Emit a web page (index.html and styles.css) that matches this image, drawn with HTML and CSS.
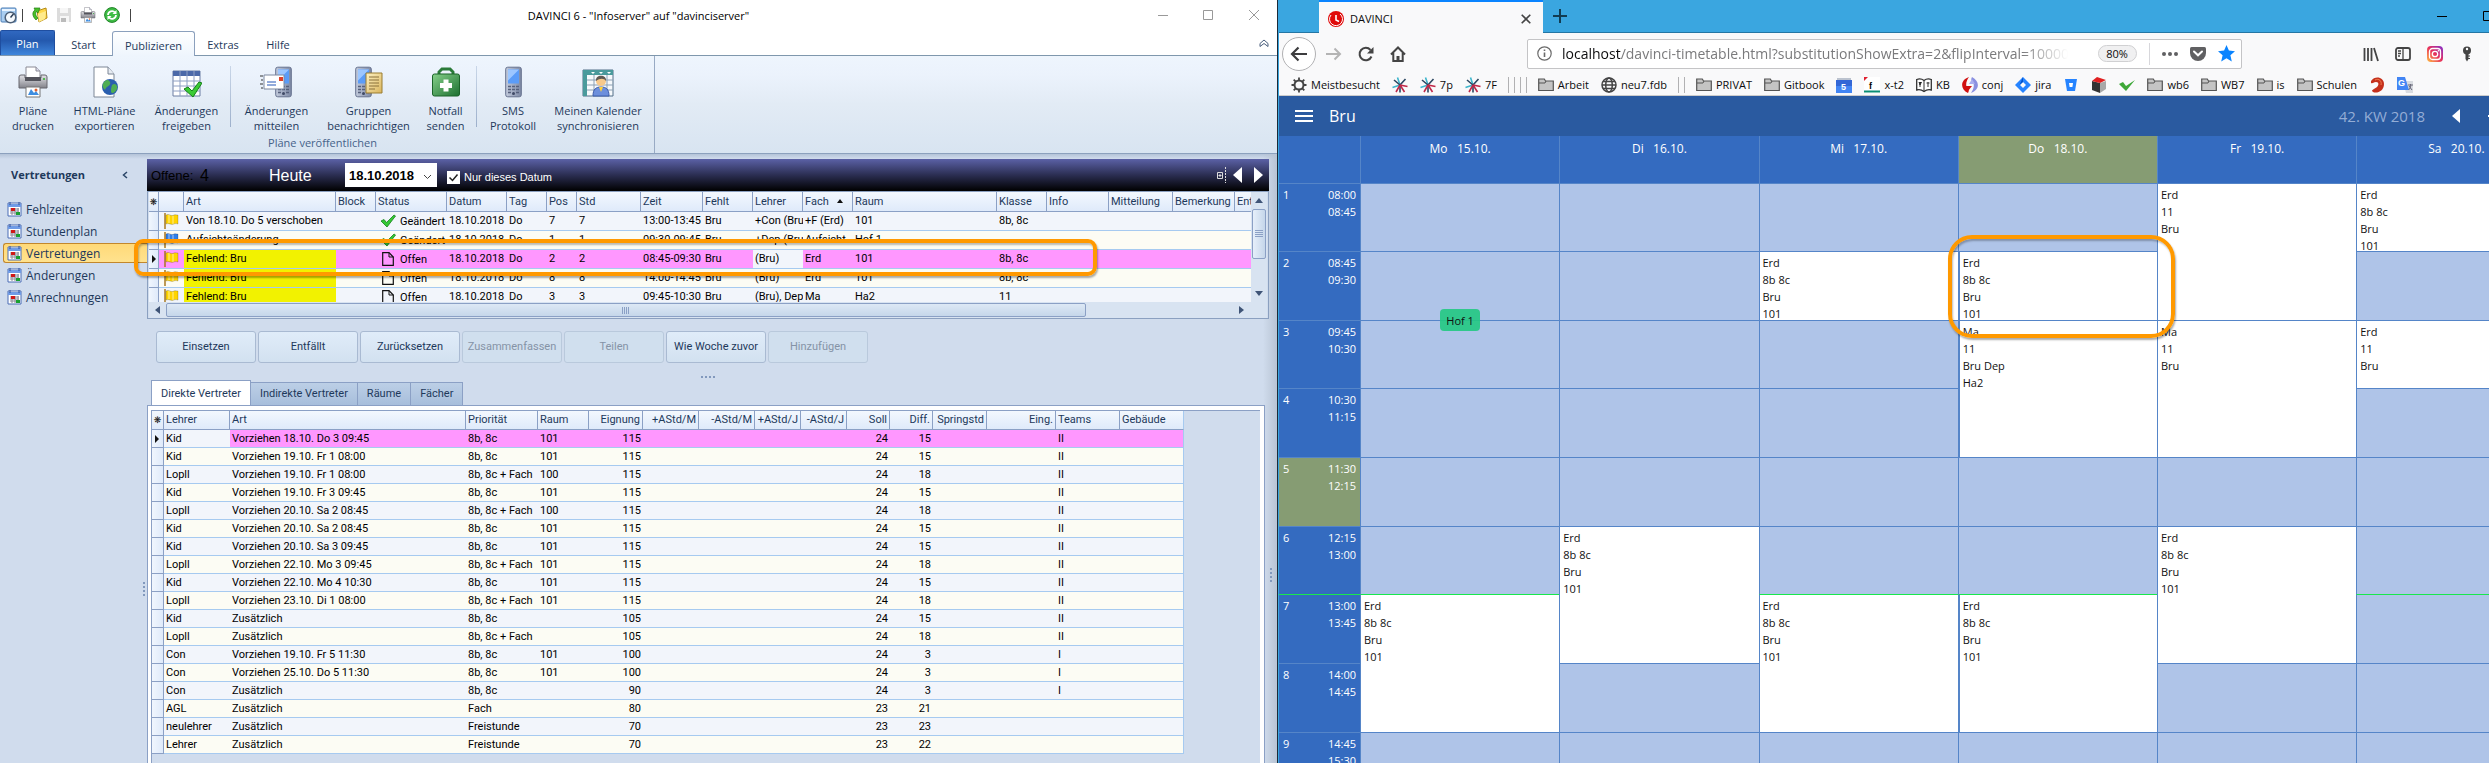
FILE: index.html
```html
<!DOCTYPE html>
<html lang="de">
<head>
<meta charset="utf-8">
<title>DAVINCI</title>
<link rel="stylesheet" href="styles.css">
</head>
<body>
<svg class="defs" aria-hidden="true">
  <defs>
    <linearGradient id="gGrey" x1="0" y1="0" x2="0" y2="1"><stop offset="0" stop-color="#e4e4e8"/><stop offset="1" stop-color="#82828a"/></linearGradient>
    <linearGradient id="gGold" x1="0" y1="0" x2="1" y2="1"><stop offset="0" stop-color="#fff3c4"/><stop offset="1" stop-color="#d9b45c"/></linearGradient>
    <linearGradient id="gGreen" x1="0" y1="0" x2="1" y2="1"><stop offset="0" stop-color="#86d08a"/><stop offset="1" stop-color="#1c7030"/></linearGradient>
    <linearGradient id="gPhone" x1="0" y1="0" x2="1" y2="0"><stop offset="0" stop-color="#c3cbdc"/><stop offset="1" stop-color="#7d89a5"/></linearGradient>
    <linearGradient id="gInsta" x1="0" y1="1" x2="1" y2="0"><stop offset="0" stop-color="#ffc040"/><stop offset=".5" stop-color="#e8305c"/><stop offset="1" stop-color="#8030d0"/></linearGradient>
    <symbol id="cal" viewBox="0 0 15 15"><path d="M1 1h13v13H1z" fill="#fff" stroke="#4a6db5"/><path d="M1 2h13v3H1z" fill="#6f9be6"/><path d="M3 0v3M12 0v3" stroke="#2c4f9c"/><path d="M3 7h9M3 9h9M3 11h9M5 6v7M8 6v7M11 6v7" stroke="#8a8a99"/><path d="M4 6h4v3H4z" fill="#d01818"/><path d="M9 10h4v3H9z" fill="#18a030"/></symbol>
    <symbol id="flag" viewBox="0 0 16 18"><path d="M2 1v16" stroke="#a87820" stroke-width="1.5"/><path d="M3 3c3-2 5 2 8 0 1-.6 3 0 4 0v9c-2-.6-3-.4-4 0-3 1.500-5-1.500-8 0z" fill="currentColor" stroke="#00000044" stroke-width=".7"/><path d="M6 3v8M10 4v8" stroke="#ffffff66" stroke-width="1.500"/></symbol>
    <symbol id="tick" viewBox="0 0 16 14"><path d="M1 7l3-1.500 2.500 3L14 1l1.500 1L7 13z" fill="#35c935" stroke="#16801c" stroke-width=".8"/></symbol>
    <symbol id="doc" viewBox="0 0 12 14"><path d="M.7.7H7L11.300 5v8.300H.7z" fill="none" stroke="#111" stroke-width="1.200"/><path d="M7 .7V5h4.300" fill="none" stroke="#111"/></symbol>
    <symbol id="folder" viewBox="0 0 16 16"><path d="M.7 13.500V2h5.600l1.200 2h7.800v9.500z" fill="#c4c4c4" stroke="#555" stroke-width="1.200"/><path d="M1 6h6l1-2" fill="none" stroke="#555"/></symbol>
    <symbol id="burst" viewBox="0 0 16 16"><path d="M8 8L5.500.5M8 8L.5 10.500" stroke="#3fb6cc" stroke-width="1.600"/><path d="M8 8l5.500-6M8 8L2 3M8 8v7.500" stroke="#2b4660" stroke-width="1.600"/><path d="M8 8l7.500 1.500M8 8l4.500 7M8 8l-4 7" stroke="#c02848" stroke-width="1.600"/></symbol>
    <symbol id="phone" viewBox="0 0 17 31"><rect x=".7" y=".7" width="15.600" height="29.600" rx="2" fill="url(#gPhone)" stroke="#66718e"/><path d="M3 3h11v14H3z" fill="#5b9cf8"/><path d="M3 3h11L3 14z" fill="#9cc6ff"/><path d="M3 20h3m1 0h3m1 0h3M3 23h3m1 0h3m1 0h3M3 26h3m5 0h3" stroke="#56607c" stroke-width="1.600"/><circle cx="8.500" cy="27" r="1.500" fill="#404a66"/></symbol>
    <symbol id="printer" viewBox="0 0 30 32"><path d="M8 12V1h10l4 4v7z" fill="#fff" stroke="#8a8a95"/><path d="M18 1v4h4" fill="#dde" stroke="#8a8a95"/><path d="M1 11q0-2 2-2h4v3h16V9h4q2 0 2 2v11H1z" fill="url(#gGrey)" stroke="#66666e"/><path d="M7 11h16v4H7z" fill="#54545c"/><path d="M8 21h14v10H8z" fill="#fff" stroke="#777"/><path d="M10 29l3-6 3 4 2-2 3 4z" fill="#3e8de0"/><circle cx="18" cy="24" r="1.500" fill="#e06030"/><circle cx="26" cy="13" r="1" fill="#28b428"/></symbol>
  </defs>
</svg>
<div class="desktop">

<section class="planner">
  <header class="titlebar">
    <div class="quick">
      <svg width="17" height="17" viewBox="0 0 17 17"><rect x="1" y="1" width="15" height="14" rx="1" fill="#a9cdf0" stroke="#4b7db5"/><path d="M2 3h13" stroke="#e9f4ff" stroke-width="2"/><circle cx="10.500" cy="10.500" r="5.300" fill="#f4f8fc" stroke="#4d6078" stroke-width="1.500"/><path d="M10.500 10.500l3-3.500" stroke="#2b3c54" stroke-width="1.500"/></svg>
      <i class="bar"></i>
      <svg class="open" width="16" height="16" viewBox="0 0 16 16"><path d="M5 4l9-3 1 10-8 4z" fill="#ffd84a" stroke="#b58a14"/><path d="M6 7l8-3-1 8-6 3z" fill="#ffeb8c"/><path d="M4 13C0 9 0 5 3 3L2 1l6 0-2 5-1.500-1.500C3 6 3.500 9 6 11z" fill="#48c028" stroke="#237d12" stroke-width=".7"/></svg>
      <svg width="16" height="16" viewBox="0 0 16 16"><path d="M1 1h14v14H1z" fill="#dcdcdc"/><path d="M4 1h8v5H4zM4 9h9v6H4z" fill="#f6f6f6"/><path d="M5 11h5v4H5z" fill="#bbb"/></svg>
      <svg width="16" height="16"><use href="#printer"/></svg>
      <svg width="16" height="16" viewBox="0 0 16 16"><circle cx="8" cy="8" r="7.400" fill="#3ebc44" stroke="#218428"/><path d="M4 8a4 4 0 0 1 7-2.500M12 8a4 4 0 0 1-7 2.500" fill="none" stroke="#fff" stroke-width="1.800"/><path d="M12.500 3v4h-4zM3.500 13V9h4z" fill="#fff"/></svg>
      <i class="bar"></i>
    </div>
    <h1>DAVINCI 6 - "Infoserver" auf "davinciserver"</h1>
    <svg class="wincontrols" width="102" height="12" viewBox="0 0 102 12" fill="none" stroke="#999"><path d="M0 6.500h10M45.500 1.500h9v9h-9zM91 1l10 10M101 1L91 11"/></svg>
  </header>
  <nav class="tabs">
    <button class="plan">Plan</button>
    <button class="t-start">Start</button>
    <button class="t-pub">Publizieren</button>
    <button class="t-ext">Extras</button>
    <button>Hilfe</button>
    <svg class="collapse" width="10" height="8" viewBox="0 0 10 8"><path d="M5 1l4 3.500v3L5 4.500l-4 3v-3z" fill="#fff" stroke="#4a5f7d"/></svg>
  </nav>
  <div class="ribbon">
    <div class="group">
      <div class="tools">
        <button class="w66"><svg width="30" height="32"><use href="#printer"/></svg>Pläne<br>drucken</button>
        <button class="w78"><svg width="30" height="32" viewBox="0 0 30 32"><path d="M4 1h14l6 7v23H4z" fill="#fff" stroke="#7c8796"/><path d="M18 1v7h6" fill="#e6ebf2" stroke="#7c8796"/><circle cx="20" cy="21" r="8" fill="#2b5fae"/><path d="M14 16c3-3 5-2 6 0s-1 4-3 5-1 4-3 2-2-5 0-7zM22 19c2-2 4-1 5 1s-1 6-4 7-2-5-1-8z" fill="#4fae54"/></svg>HTML-Pläne<br>exportieren</button>
        <button class="w87"><svg width="30" height="32" viewBox="0 0 30 32"><path d="M1 5h27v25H1z" fill="#fff" stroke="#6d7fa3"/><path d="M1 5h27v5H1z" fill="#4c69a8"/><path d="M1 15h27M1 20h27M1 25h27M8 5v25M15 5v25M22 5v25" stroke="#8fa0c4"/><path d="M12 23l4-2 4 4 7-9 3 1-9 14z" fill="#3bcb35" stroke="#178019"/></svg>Änderungen<br>freigeben</button>
        <i class="sep"></i>
        <button class="w91"><svg width="34" height="32" viewBox="0 0 34 32"><svg x="15" y="0" width="17" height="31"><use href="#phone"/></svg><path d="M4 9h20v14H4z" fill="#fff" stroke="#7c88a0"/><path d="M7 16h9M7 19h9" stroke="#6f8fd0" stroke-width="1.500"/><path d="M19 11h4v4h-4z" fill="#e04028"/><path d="M0 10h3M1 14h2M0 18h3M1 22h2" stroke="#333"/></svg>Änderungen<br>mitteilen</button>
        <button class="w93"><svg width="30" height="32" viewBox="0 0 30 32"><svg x="1" y="0" width="17" height="31"><use href="#phone"/></svg><path d="M12 7h16v20H12z" fill="url(#gGold)" stroke="#9a7c30"/><path d="M15 11h10M15 14h10M15 17h10M15 20h10M15 23h6" stroke="#8a713a"/></svg>Gruppen<br>benachrichtigen</button>
        <button class="w62"><svg width="30" height="32" viewBox="0 0 30 32"><path d="M8 9V6l3-3h8l3 3v3" fill="none" stroke="#2a7a38" stroke-width="3"/><rect x="1.500" y="8" width="27" height="22" rx="2" fill="url(#gGreen)" stroke="#1b6429"/><path d="M12.500 13.500h5v3.500h3.500v5h-3.500v3.500h-5V22H9v-5h3.500z" fill="#fff"/></svg>Notfall<br>senden</button>
        <i class="sep"></i>
        <button class="w72"><svg width="17" height="31"><use href="#phone"/></svg>SMS<br>Protokoll</button>
        <button class="w98"><svg width="32" height="32" viewBox="0 0 32 32"><path d="M1 4h30v26H1z" fill="#f6f9fc" stroke="#536f88"/><path d="M1 4h30v5H1zM1 4h4v26H1z" fill="#4a9a9c"/><path d="M5 14h26M5 19h26M5 24h26M12 9v21M25 9v21" stroke="#8ba0b4"/><path d="M9 6l2 2 2-2zM17 6l2 2 2-2zM25 6l2 2 2-2z" fill="#fff"/><path d="M11 30c0-7 3-9 8-9s8 2 8 9z" fill="#6d8fdc" stroke="#3c5cac"/><circle cx="19" cy="15" r="5" fill="#f7c98c"/><path d="M14 15c-1-7 11-7 10 0-2-3-6-3-10 0z" fill="#5f5a55"/><path d="M17 21h4l-2 5z" fill="#ffd23c"/></svg>Meinen Kalender<br>synchronisieren</button>
      </div>
      <div class="caption">Pläne veröffentlichen</div>
    </div>
  </div>

  <div class="workspace">
    <aside class="side">
      <div class="side-head"><strong>Vertretungen</strong><svg width="6" height="8" viewBox="0 0 6 8"><path d="M5 1L1.500 4 5 7" fill="none" stroke="#2b4668" stroke-width="1.500"/></svg></div>
      <a href="#"><svg width="15" height="15"><use href="#cal"/></svg>Fehlzeiten</a>
      <a href="#"><svg width="15" height="15"><use href="#cal"/></svg>Stundenplan</a>
      <a href="#" class="on"><svg width="15" height="15"><use href="#cal"/></svg>Vertretungen</a>
      <a href="#"><svg width="15" height="15"><use href="#cal"/></svg>Änderungen</a>
      <a href="#"><svg width="15" height="15"><use href="#cal"/></svg>Anrechnungen</a>
      <span class="grip-v"></span>
    </aside>

    <main class="content">
      <div class="datebar">
        <span class="open-label">Offene:</span><span class="open-count">4</span>
        <span class="today">Heute</span>
        <span class="combo"><select aria-label="Datum"><option>18.10.2018</option></select><svg width="9" height="6" viewBox="0 0 9 6"><path d="M1 1l3.500 3.500L8 1" fill="none" stroke="#444"/></svg></span>
        <label class="only"><input type="checkbox" checked>Nur dieses Datum</label>
        <svg class="pager" width="48" height="18" viewBox="0 0 48 18"><path d="M1.500 6.500h5v6h-5z" fill="none" stroke="#ddd"/><path d="M4 8v3M2.500 9.500h3" stroke="#ddd"/><path d="M9.500 1v16" stroke="#ddd" stroke-dasharray="2 1"/><path d="M26 1v16L17 9zM38 1v16l9-8z" fill="#fff"/></svg>
      </div>

      <div class="pane">
        <div class="clip">
          <table class="grid subs">
            <colgroup><col class="c10"><col class="c25"><col class="c152"><col class="c40"><col class="c71"><col class="c60"><col class="c40"><col class="c30"><col class="c64"><col class="c62"><col class="c50"><col class="c50"><col class="c50"><col class="c144"><col class="c50"><col class="c62"><col class="c64"><col class="c62"><col class="c40"></colgroup>
            <thead><tr><th class="star">❋</th><th></th><th>Art</th><th>Block</th><th>Status</th><th>Datum</th><th>Tag</th><th>Pos</th><th>Std</th><th>Zeit</th><th>Fehlt</th><th>Lehrer</th><th>Fach <i class="asc"></i></th><th>Raum</th><th>Klasse</th><th>Info</th><th>Mitteilung</th><th>Bemerkung</th><th>Ent</th></tr></thead>
            <tbody>
              <tr><td class="ind"></td><td class="fl"><svg class="yellow" width="16" height="18"><use href="#flag"/></svg></td><td>Von 18.10. Do 5 verschoben</td><td></td><td class="st"><svg width="16" height="14"><use href="#tick"/></svg>Geändert</td><td>18.10.2018</td><td>Do</td><td>7</td><td>7</td><td>13:00-13:45</td><td>Bru</td><td>+Con (Bru)</td><td>+F (Erd)</td><td>101</td><td>8b, 8c</td><td></td><td></td><td></td><td></td></tr>
              <tr><td class="ind"></td><td class="fl"><svg class="blue" width="16" height="18"><use href="#flag"/></svg></td><td>Aufsichtsänderung</td><td></td><td class="st"><svg width="16" height="14"><use href="#tick"/></svg>Geändert</td><td>18.10.2018</td><td>Do</td><td>1</td><td>1</td><td>09:30-09:45</td><td>Bru</td><td>+Dep (Bru)</td><td>Aufsicht</td><td>Hof 1</td><td></td><td></td><td></td><td></td><td></td></tr>
              <tr class="sel"><td class="ind"><i class="cur"></i></td><td class="fl"><svg class="yellow" width="16" height="18"><use href="#flag"/></svg></td><td class="hl">Fehlend: Bru</td><td></td><td class="st"><svg width="16" height="14"><use href="#doc"/></svg>Offen</td><td>18.10.2018</td><td>Do</td><td>2</td><td>2</td><td>08:45-09:30</td><td>Bru</td><td class="focus">(Bru)</td><td>Erd</td><td>101</td><td>8b, 8c</td><td></td><td></td><td></td><td></td></tr>
              <tr><td class="ind"></td><td class="fl"><svg class="yellow" width="16" height="18"><use href="#flag"/></svg></td><td class="hl">Fehlend: Bru</td><td></td><td class="st"><svg width="16" height="14"><use href="#doc"/></svg>Offen</td><td>18.10.2018</td><td>Do</td><td>8</td><td>8</td><td>14:00-14:45</td><td>Bru</td><td>(Bru)</td><td>Erd</td><td>101</td><td>8b, 8c</td><td></td><td></td><td></td><td></td></tr>
              <tr><td class="ind"></td><td class="fl"><svg class="yellow" width="16" height="18"><use href="#flag"/></svg></td><td class="hl">Fehlend: Bru</td><td></td><td class="st"><svg width="16" height="14"><use href="#doc"/></svg>Offen</td><td>18.10.2018</td><td>Do</td><td>3</td><td>3</td><td>09:45-10:30</td><td>Bru</td><td>(Bru), Dep</td><td>Ma</td><td>Ha2</td><td>11</td><td></td><td></td><td></td><td></td></tr>
            </tbody>
          </table>
        </div>
        <div class="vscroll"><i class="up"></i><span class="thumb"></span><i class="down"></i></div>
        <div class="hscroll"><i class="left"></i><span class="thumb"></span><i class="right"></i></div>
      </div>
      <div class="ring ring-row"></div>

      <div class="actions">
        <button>Einsetzen</button><button>Entfällt</button><button>Zurücksetzen</button><button disabled>Zusammenfassen</button><button disabled>Teilen</button><button>Wie Woche zuvor</button><button disabled>Hinzufügen</button>
      </div>
      <div class="grip-h"></div>

      <div class="subtabs"><button class="on">Direkte Vertreter</button><button>Indirekte Vertreter</button><button>Räume</button><button>Fächer</button></div>
      <div class="sheet">
        <div class="sheet-in">
        <table class="grid reps">
          <colgroup><col class="c12"><col class="c66"><col class="c236"><col class="c72"><col class="c51"><col class="c54"><col class="c56"><col class="c56"><col class="c46"><col class="c46"><col class="c43"><col class="c43"><col class="c54"><col class="c69"><col class="c64"><col class="c64"></colgroup>
          <thead><tr><th class="star">❋</th><th>Lehrer</th><th>Art</th><th>Priorität</th><th>Raum</th><th class="r">Eignung</th><th class="r">+AStd/M</th><th class="r">-AStd/M</th><th class="r">+AStd/J</th><th class="r">-AStd/J</th><th class="r">Soll</th><th class="r">Diff.</th><th class="r">Springstd</th><th class="r">Eing.</th><th>Teams</th><th>Gebäude</th></tr></thead>
          <tbody>
            <tr class="sel"><td class="ind"><i class="cur"></i></td><td class="focus">Kid</td><td>Vorziehen 18.10. Do 3 09:45</td><td>8b, 8c</td><td>101</td><td class="r">115</td><td colspan="4"></td><td class="r">24</td><td class="r">15</td><td colspan="2"></td><td>II</td><td></td></tr>
            <tr><td class="ind"></td><td>Kid</td><td>Vorziehen 19.10. Fr 1 08:00</td><td>8b, 8c</td><td>101</td><td class="r">115</td><td colspan="4"></td><td class="r">24</td><td class="r">15</td><td colspan="2"></td><td>II</td><td></td></tr>
            <tr><td class="ind"></td><td>Lopll</td><td>Vorziehen 19.10. Fr 1 08:00</td><td>8b, 8c + Fach</td><td>100</td><td class="r">115</td><td colspan="4"></td><td class="r">24</td><td class="r">18</td><td colspan="2"></td><td>II</td><td></td></tr>
            <tr><td class="ind"></td><td>Kid</td><td>Vorziehen 19.10. Fr 3 09:45</td><td>8b, 8c</td><td>101</td><td class="r">115</td><td colspan="4"></td><td class="r">24</td><td class="r">15</td><td colspan="2"></td><td>II</td><td></td></tr>
            <tr><td class="ind"></td><td>Lopll</td><td>Vorziehen 20.10. Sa 2 08:45</td><td>8b, 8c + Fach</td><td>100</td><td class="r">115</td><td colspan="4"></td><td class="r">24</td><td class="r">18</td><td colspan="2"></td><td>II</td><td></td></tr>
            <tr><td class="ind"></td><td>Kid</td><td>Vorziehen 20.10. Sa 2 08:45</td><td>8b, 8c</td><td>101</td><td class="r">115</td><td colspan="4"></td><td class="r">24</td><td class="r">15</td><td colspan="2"></td><td>II</td><td></td></tr>
            <tr><td class="ind"></td><td>Kid</td><td>Vorziehen 20.10. Sa 3 09:45</td><td>8b, 8c</td><td>101</td><td class="r">115</td><td colspan="4"></td><td class="r">24</td><td class="r">15</td><td colspan="2"></td><td>II</td><td></td></tr>
            <tr><td class="ind"></td><td>Lopll</td><td>Vorziehen 22.10. Mo 3 09:45</td><td>8b, 8c + Fach</td><td>101</td><td class="r">115</td><td colspan="4"></td><td class="r">24</td><td class="r">18</td><td colspan="2"></td><td>II</td><td></td></tr>
            <tr><td class="ind"></td><td>Kid</td><td>Vorziehen 22.10. Mo 4 10:30</td><td>8b, 8c</td><td>101</td><td class="r">115</td><td colspan="4"></td><td class="r">24</td><td class="r">15</td><td colspan="2"></td><td>II</td><td></td></tr>
            <tr><td class="ind"></td><td>Lopll</td><td>Vorziehen 23.10. Di 1 08:00</td><td>8b, 8c + Fach</td><td>101</td><td class="r">115</td><td colspan="4"></td><td class="r">24</td><td class="r">18</td><td colspan="2"></td><td>II</td><td></td></tr>
            <tr><td class="ind"></td><td>Kid</td><td>Zusätzlich</td><td>8b, 8c</td><td></td><td class="r">105</td><td colspan="4"></td><td class="r">24</td><td class="r">15</td><td colspan="2"></td><td>II</td><td></td></tr>
            <tr><td class="ind"></td><td>Lopll</td><td>Zusätzlich</td><td>8b, 8c + Fach</td><td></td><td class="r">105</td><td colspan="4"></td><td class="r">24</td><td class="r">18</td><td colspan="2"></td><td>II</td><td></td></tr>
            <tr><td class="ind"></td><td>Con</td><td>Vorziehen 19.10. Fr 5 11:30</td><td>8b, 8c</td><td>101</td><td class="r">100</td><td colspan="4"></td><td class="r">24</td><td class="r">3</td><td colspan="2"></td><td>I</td><td></td></tr>
            <tr><td class="ind"></td><td>Con</td><td>Vorziehen 25.10. Do 5 11:30</td><td>8b, 8c</td><td>101</td><td class="r">100</td><td colspan="4"></td><td class="r">24</td><td class="r">3</td><td colspan="2"></td><td>I</td><td></td></tr>
            <tr><td class="ind"></td><td>Con</td><td>Zusätzlich</td><td>8b, 8c</td><td></td><td class="r">90</td><td colspan="4"></td><td class="r">24</td><td class="r">3</td><td colspan="2"></td><td>I</td><td></td></tr>
            <tr><td class="ind"></td><td>AGL</td><td>Zusätzlich</td><td>Fach</td><td></td><td class="r">80</td><td colspan="4"></td><td class="r">23</td><td class="r">21</td><td colspan="2"></td><td></td><td></td></tr>
            <tr><td class="ind"></td><td>neulehrer</td><td>Zusätzlich</td><td>Freistunde</td><td></td><td class="r">70</td><td colspan="4"></td><td class="r">23</td><td class="r">23</td><td colspan="2"></td><td></td><td></td></tr>
            <tr><td class="ind"></td><td>Lehrer</td><td>Zusätzlich</td><td>Freistunde</td><td></td><td class="r">70</td><td colspan="4"></td><td class="r">23</td><td class="r">22</td><td colspan="2"></td><td></td><td></td></tr>
          </tbody>
        </table>
        </div>
      </div>
      <span class="grip-v grip-right"></span>
    </main>
  </div>
</section>

<section class="browser">
  <header class="tabstrip">
    <div class="btab"><svg width="16" height="16" viewBox="0 0 16 16"><circle cx="8" cy="8" r="8" fill="#e00a0a"/><path d="M3 4a6.500 6.500 0 1 0 9-1" fill="none" stroke="#fff"/><path d="M8 4v5l3 1.500" fill="none" stroke="#fff" stroke-width="1.600"/></svg><span>DAVINCI</span><svg width="10" height="10" viewBox="0 0 10 10"><path d="M.7.700l8.600 8.600M9.300.7L.7 9.300" stroke="#444" stroke-width="1.600"/></svg></div>
    <svg class="plus" width="14" height="14" viewBox="0 0 14 14"><path d="M7 0v14M0 7h14" stroke="#123c52" stroke-width="2"/></svg>
    <svg class="bcontrols" width="52" height="12" viewBox="0 0 52 12" fill="none" stroke="#000"><path d="M0 6.500h10M46.500 1.500h9v9h-9z"/></svg>
  </header>
  <div class="toolbar">
    <button class="back" aria-label="Zurück"><svg width="18" height="16" viewBox="0 0 18 16"><path d="M17 8H2M8.500 1.500L2 8l6.500 6.500" fill="none" stroke="#3c3c3e" stroke-width="2.200"/></svg></button>
    <button aria-label="Vor"><svg width="16" height="16" viewBox="0 0 16 16"><path d="M0 8h14M8.500 2.500L14 8l-5.500 5.500" fill="none" stroke="#b4b4b4" stroke-width="2"/></svg></button>
    <button aria-label="Neu laden"><svg width="16" height="16" viewBox="0 0 16 16"><path d="M13.500 10.500A6.200 6.200 0 1 1 12.500 4" fill="none" stroke="#444" stroke-width="2"/><path d="M15.500 1v6.500H9z" fill="#444"/></svg></button>
    <button aria-label="Startseite"><svg width="16" height="16" viewBox="0 0 16 16"><path d="M1 8.500L8 1.500l7 7M3.300 7v8h9.400V7M8 15v-4.500" fill="none" stroke="#444" stroke-width="2"/><path d="M6.500 10h3v5h-3z" fill="#444"/></svg></button>
    <div class="url">
      <svg width="15" height="15" viewBox="0 0 15 15"><circle cx="7.500" cy="7.500" r="6.700" fill="none" stroke="#6a6a6a" stroke-width="1.200"/><path d="M7.500 6.500v4.500M7.500 3.500v1.600" stroke="#6a6a6a" stroke-width="1.600"/></svg>
      <div class="addr"><b>localhost</b>/davinci-timetable.html?substitutionShowExtra=2&amp;flipInterval=100000&amp;r</div>
      <span class="zoom">80%</span>
      <i class="urlsep"></i>
      <svg width="16" height="16" viewBox="0 0 16 16" fill="#606062"><circle cx="2" cy="8" r="2"/><circle cx="8" cy="8" r="2"/><circle cx="14" cy="8" r="2"/></svg>
      <svg width="16" height="16" viewBox="0 0 16 16"><path d="M0 2.500Q0 1 1.500 1h13Q16 1 16 2.500V7a8 8 0 0 1-16 0z" fill="#606062"/><path d="M4 5.500L8 9.300l4-3.800" fill="none" stroke="#fff" stroke-width="2" stroke-linecap="round"/></svg>
      <svg width="17" height="17" viewBox="0 0 17 17"><path d="M8.500 0l2.400 5.600 6.100.6-4.600 4 1.400 6.300-5.300-3.300-5.300 3.300 1.400-6.300-4.600-4 6.100-.6z" fill="#0a84ff"/></svg>
    </div>
    <div class="ext">
      <svg width="16" height="16" viewBox="0 0 16 16"><path d="M1.500 2v13M5 2v13M8.500 2v13M11 2l4 13" stroke="#444" stroke-width="1.800"/></svg>
      <svg width="16" height="16" viewBox="0 0 16 16"><rect x="1" y="2" width="14" height="12" rx="2" fill="none" stroke="#444" stroke-width="1.800"/><path d="M8 2v12M3 5h3M3 7.500h3M3 10h2" stroke="#444" stroke-width="1.300"/></svg>
      <svg width="16" height="16" viewBox="0 0 16 16"><rect width="16" height="16" rx="4" fill="url(#gInsta)"/><rect x="2.500" y="2.500" width="11" height="11" rx="3" fill="none" stroke="#fff" stroke-width="1.300"/><circle cx="8" cy="8" r="2.700" fill="none" stroke="#fff" stroke-width="1.300"/><circle cx="11.500" cy="4.700" r=".8" fill="#fff"/></svg>
      <svg width="16" height="16" viewBox="0 0 16 16"><circle cx="8" cy="4.500" r="4" fill="#444"/><circle cx="8" cy="3" r="1.200" fill="#fff"/><path d="M6.500 7h3v6L8 15.500 6.500 13z" fill="#444"/><path d="M9 10h2M9 12.500h2" stroke="#444"/></svg>
    </div>
  </div>
  <nav class="bookmarks">
    <a href="#"><svg width="16" height="16" viewBox="0 0 16 16"><circle cx="8" cy="8" r="4.500" fill="none" stroke="#444" stroke-width="2"/><path d="M8 .5v3M8 12.500v3M.5 8h3M12.500 8h3M2.700 2.700l2 2M11.300 11.300l2 2M13.300 2.700l-2 2M2.700 13.300l2-2" stroke="#444" stroke-width="1.800"/></svg>Meistbesucht</a>
    <a href="#" aria-label="Lesezeichen"><svg width="16" height="16"><use href="#burst"/></svg></a>
    <a href="#"><svg width="16" height="16"><use href="#burst"/></svg>7p</a>
    <a href="#"><svg width="16" height="16"><use href="#burst"/></svg>7F</a>
    <span class="rules"><i></i><i></i><i></i><i></i></span>
    <a href="#"><svg width="16" height="16"><use href="#folder"/></svg>Arbeit</a>
    <a href="#"><svg width="16" height="16" viewBox="0 0 16 16" fill="none" stroke="#444" stroke-width="1.500"><circle cx="8" cy="8" r="7"/><ellipse cx="8" cy="8" rx="3.300" ry="7"/><path d="M1 8h14M2 4.500h12M2 11.500h12"/></svg>neu7.fdb</a>
    <span class="rules"><i></i><i></i></span>
    <a href="#"><svg width="16" height="16"><use href="#folder"/></svg>PRIVAT</a>
    <a href="#"><svg width="16" height="16"><use href="#folder"/></svg>Gitbook</a>
    <a href="#" aria-label="Kalender"><svg width="16" height="16" viewBox="0 0 16 16"><path d="M0 3h16v13H0z" fill="#3367d6"/><path d="M1 1h14v2H1z" fill="#bcc3cf"/><path d="M0 9h16v7H0z" fill="#4285f4"/><text x="5" y="13" class="mini white">5</text></svg></a>
    <a href="#"><svg width="16" height="16" viewBox="0 0 16 16"><path d="M0 0h16v16H0z" fill="#fff"/><path d="M0 0h4L0 4z" fill="#e02030"/><path d="M0 14.500h16" stroke="#0b8e74" stroke-width="2"/><text x="5" y="12" class="mini">f</text></svg>x-t2</a>
    <a href="#"><svg width="16" height="16" viewBox="0 0 16 16"><path d="M.7 2.500q4-1.500 7.300 1 3.300-2.500 7.300-1v10.500q-4-1-7.300 1.500Q4.700 12 .7 13z" fill="#fff" stroke="#333" stroke-width="1.300"/><path d="M8 3.500v11M4 5v5M12 5v5M3 5l1 3 1.500-3M10.500 6h3" stroke="#333"/></svg>KB</a>
    <a href="#"><svg width="16" height="16" viewBox="0 0 16 16"><path d="M7 0C-2 3-2 12 6 16c1-2 1-3 0-4-3-3-2-8 1-12z" fill="#d01010"/><path d="M3 9h7l-4 5z" fill="#d01010"/><path d="M9 16c9-3 9-12 1-16-1 2-1 3 0 4 3 3 2 8-1 12z" fill="#8a90e0"/><path d="M13 7H7l3-5z" fill="#a9aef0"/></svg>conj</a>
    <a href="#"><svg width="16" height="16" viewBox="0 0 16 16"><path d="M8 0l8 8-8 8-8-8z" fill="#2684ff"/><path d="M8 5l3 3-3 3-3-3z" fill="#f9f9fa"/><path d="M8 0v5L4.500 8z" fill="#0052cc"/></svg>jira</a>
    <a href="#" aria-label="Repository"><svg width="16" height="16" viewBox="0 0 16 16"><path d="M2 2h12l-2 12H4z" fill="#2684ff"/><path d="M6 6h4l-.6 4H6.600z" fill="#fff"/></svg></a>
    <a href="#" aria-label="Paket"><svg width="16" height="16" viewBox="0 0 16 16"><path d="M1 4l8 2v10l-8-3z" fill="#333"/><path d="M9 6l6-2v8l-6 4z" fill="#a8a8a8"/><path d="M1 4l5-4 9 3-6 3z" fill="#e02020"/></svg></a>
    <a href="#" aria-label="Aufgaben"><svg width="16" height="16" viewBox="0 0 16 16"><path d="M0 7l4-2 3 4 9-6-9 11z" fill="#3ea838"/></svg></a>
    <a href="#"><svg width="16" height="16"><use href="#folder"/></svg>wb6</a>
    <a href="#"><svg width="16" height="16"><use href="#folder"/></svg>WB7</a>
    <a href="#"><svg width="16" height="16"><use href="#folder"/></svg>is</a>
    <a href="#"><svg width="16" height="16"><use href="#folder"/></svg>Schulen</a>
    <a href="#" aria-label="Suche"><svg width="16" height="16" viewBox="0 0 16 16"><path d="M2 4C6-2 15 0 15 7s-7 10-11 8c-3-2 2-3 4-5s2-5-1-5-3 2-5 1z" fill="#c5301c"/><path d="M6 3c4-2 7 1 6 5" fill="none" stroke="#f08050"/></svg></a>
    <a href="#" aria-label="Übersetzer"><svg width="16" height="16" viewBox="0 0 16 16"><path d="M6 4h10v12H9z" fill="#d8dbe0"/><path d="M0 0h8l4 13H0z" fill="#4285f4"/><text x="1" y="9" class="mini white">G</text><path d="M11 8h5M13.500 7c1 3-1 5-2 6M12 9l3 4" stroke="#667" fill="none"/></svg></a>
  </nav>

  <div class="appbar">
    <button class="menu" aria-label="Menü"><i></i><i></i><i></i></button>
    <h2>Bru</h2>
    <span class="week">42. KW 2018</span>
    <button class="prev" aria-label="Vorherige Woche"></button>
    <button class="next" aria-label="Nächste Woche"></button>
  </div>
  <div class="plan-wrap">
    <table class="timetable">
      <colgroup><col class="c81"><col><col><col><col><col><col></colgroup>
      <thead><tr><th></th><th>Mo &nbsp; 15.10.</th><th>Di &nbsp; 16.10.</th><th>Mi &nbsp; 17.10.</th><th class="now">Do &nbsp; 18.10.</th><th>Fr &nbsp; 19.10.</th><th>Sa &nbsp; 20.10.</th></tr></thead>
      <tbody>
        <tr class="h68"><th><div><b>1</b><span>08:00<br>08:45</span></div></th><td></td><td></td><td></td><td></td><td class="ev" rowspan="2"><div>Erd<br>11<br>Bru</div></td><td class="ev"><div>Erd<br>8b 8c<br>Bru<br>101</div></td></tr>
        <tr><th><div><b>2</b><span>08:45<br>09:30</span></div></th><td></td><td></td><td class="ev"><div>Erd<br>8b 8c<br>Bru<br>101</div></td><td class="ev thick"><div>Erd<br>8b 8c<br>Bru<br>101</div></td><td></td></tr>
        <tr class="h68"><th><div><b>3</b><span>09:45<br>10:30</span></div></th><td class="duty"><span>Hof 1</span></td><td></td><td></td><td class="ev thick" rowspan="2"><div>Ma<br>11<br>Bru Dep<br>Ha2</div></td><td class="ev" rowspan="2"><div>Ma<br>11<br>Bru</div></td><td class="ev"><div>Erd<br>11<br>Bru</div></td></tr>
        <tr><th><div><b>4</b><span>10:30<br>11:15</span></div></th><td></td><td></td><td></td><td></td></tr>
        <tr><th class="now"><div><b>5</b><span>11:30<br>12:15</span></div></th><td></td><td></td><td></td><td></td><td></td><td></td></tr>
        <tr class="h68"><th><div><b>6</b><span>12:15<br>13:00</span></div></th><td></td><td class="ev" rowspan="2"><div>Erd<br>8b 8c<br>Bru<br>101</div></td><td></td><td></td><td class="ev" rowspan="2"><div>Erd<br>8b 8c<br>Bru<br>101</div></td><td></td></tr>
        <tr class="current"><th><div><b>7</b><span>13:00<br>13:45</span></div></th><td class="ev" rowspan="2"><div>Erd<br>8b 8c<br>Bru<br>101</div></td><td class="ev" rowspan="2"><div>Erd<br>8b 8c<br>Bru<br>101</div></td><td class="ev thick" rowspan="2"><div>Erd<br>8b 8c<br>Bru<br>101</div></td><td></td></tr>
        <tr><th><div><b>8</b><span>14:00<br>14:45</span></div></th><td></td><td></td><td></td></tr>
        <tr><th><div><b>9</b><span>14:45<br>15:30</span></div></th><td></td><td></td><td></td><td></td><td></td><td></td></tr>
      </tbody>
    </table>
    <div class="ring ring-cell"></div>
  </div>
</section>
</div>
</body>
</html>
```
FILE: styles.css
```css
* { box-sizing: border-box; }
body { margin: 0; font: 11px/15px "Open Sans", sans-serif; color: #1e395b; }
button, select, input { font: inherit; color: inherit; margin: 0; padding: 0; border: 0; background: none; }
a { color: inherit; text-decoration: none; }
i { display: block; }
svg { display: block; flex: none; }
h1, h2 { margin: 0; font-weight: 400; }
.defs { position: absolute; width: 0; height: 0; }
.desktop { display: grid; grid-template-columns: 1277fr 1212fr; height: 100vh; overflow: hidden; }
.planner { display: flex; flex-direction: column; min-width: 0; background: #d0dced; }

.titlebar { display: grid; grid-template-columns: 1fr auto 1fr; align-items: center; height: 30px; background: #fff; }
.quick { display: flex; align-items: center; gap: 8px; }
.quick svg + .bar { margin-left: -3px; margin-right: 1px; }
.quick .bar:last-child { margin-left: 2px; }
.bar { width: 1px; height: 13px; background: #444; }
.titlebar h1 { color: #000; font-size: 11px; }
.wincontrols { justify-self: end; margin-right: 17px; }

.tabs { display: flex; align-items: stretch; height: 26px; background: #fff; border-bottom: 1px solid #7f97ad; }
.tabs button { padding-top: 4px; }
.tabs .plan { width: 55px; color: #fff; padding-top: 0; border: 1px solid #1f4ea0; border-bottom: 0; border-radius: 2px 2px 0 0; background: linear-gradient(#3068c0, #2459ae 40%, #3f86dc); }
.t-start { width: 57px; }
.tabs .t-pub { width: 83px; margin: 1px 0 -1px; padding-top: 2px; border: 1px solid #8ba0bd; border-bottom: 0; border-radius: 3px 3px 0 0; background: linear-gradient(#fff, #eef5fd); }
.t-ext { width: 56px; }
.tabs button:nth-child(5) { width: 54px; }
.collapse { margin: 9px 8px 0 auto; }

.ribbon { height: 98px; display: flex; background: linear-gradient(#eef5fd, #ebf2fc 20%, #e2ebf5 50%, #d8e4f1); border-bottom: 1px solid #8ba0bd; }
.group { border-right: 1px solid #98aac4; padding-right: 7px; }
.tools { display: flex; align-items: flex-start; height: 78px; padding-top: 10px; }
.tools button { display: block; text-align: center; padding: 0; }
.tools button svg { margin: 0 auto 5px; height: 32px; }
.sep { width: 1px; height: 61px; background: linear-gradient(#c9d6e8, #9db0cb); }
.caption { text-align: center; color: #46628a; line-height: 18px; padding-right: 2px; }
.w66 { width: 66px; } .w78 { width: 77px; } .w87 { width: 87px; } .w91 { width: 91px; } .w93 { width: 93px; }
.w62 { width: 61px; } .w72 { width: 72px; } .w98 { width: 98px; }

.workspace { flex: 1; display: flex; min-height: 0; padding-top: 5px; background: linear-gradient(to right, transparent calc(100% - 14px), #b8c4d4), linear-gradient(#b4c3d8, #d0dced 5px); }
.side { position: relative; width: 147px; flex: none; }
.side-head { display: flex; align-items: center; gap: 37px; height: 31px; padding-left: 11px; margin-bottom: 9px; }
.side a { display: flex; align-items: center; gap: 4px; height: 20px; margin: 0 0 2px 3px; padding-left: 4px; font-size: 12px; border: 1px solid transparent; border-right: 0; }
.side a svg { margin-left: -1px; }
.side .on { border-color: #c2872c; border-radius: 3px 0 0 3px; background: linear-gradient(#ffd978, #ffe28e); }
.grip-v { position: absolute; left: 143px; top: 423px; width: 2px; height: 14px; background: repeating-linear-gradient(#8299bd 0 2px, transparent 2px 4px); }
.content { position: relative; flex: 1; min-width: 0; display: flex; flex-direction: column; margin-right: 8px; }
.grip-right { left: auto; right: -3px; top: 409px; }

.datebar { display: flex; align-items: center; height: 32px; padding: 0 5px 0 4px; background: linear-gradient(#5b61a6, #2b2e52 50%, #000); font-family: "Liberation Sans", sans-serif; color: #fff; }
.open-label { color: #000; font-size: 13px; width: 49px; }
.open-count { color: #000; font-size: 16px; width: 69px; }
.today { font-size: 16px; width: 76px; }
.combo { position: relative; width: 92px; height: 24px; background: #fff; }
.combo select { width: 100%; height: 100%; padding: 0 0 0 4px; appearance: none; color: #000; font: bold 13px "Liberation Sans", sans-serif; }
.combo svg { position: absolute; right: 5px; top: 11px; pointer-events: none; }
.only { display: flex; align-items: center; gap: 4px; margin: 4px 0 0 10px; font-size: 11px; }
.only input { appearance: none; width: 13px; height: 13px; background: #fff url("data:image/svg+xml,%3Csvg xmlns='http://www.w3.org/2000/svg' viewBox='0 0 13 13'%3E%3Cpath d='M2.500 6.500l3 3 5-6' fill='none' stroke='%23222' stroke-width='1.500'/%3E%3C/svg%3E"); }
.pager { margin-left: auto; }

.pane { display: grid; grid-template-columns: 1fr 16px; border: 1px solid #8ba0c0; padding: 0 1px; background: #d0dced; }
.clip { height: 110px; overflow: hidden; min-width: 0; }
.grid { border-collapse: separate; border-spacing: 0; table-layout: fixed; font: 11px/14px Roboto, sans-serif; color: #000; }
.grid th { height: 20px; padding: 0 0 0 2px; text-align: left; font-weight: 400; color: #1e395b; background: linear-gradient(#f3f8fe, #dfeafa); border-right: 1px solid #8ba0c5; border-bottom: 1px solid #8ba0c5; }
.grid td { height: 19px; padding: 0 0 0 2px; border-bottom: 1px solid #a6caf0; }
.grid th, .grid td { overflow: hidden; white-space: nowrap; }
.grid tr:nth-child(odd) { background: #f2f5fb; }
.grid tr:nth-child(even) { background: #fcfcf4; }
.grid tr.sel { background: #ff97ff; }
.grid .r { text-align: right; padding: 0 2px 0 0; }
.grid .star { padding: 0; text-align: center; font-family: "DejaVu Sans", sans-serif; font-size: 9px; color: #111; line-height: 10px; }
.grid .ind { padding: 0; border-right: 1px solid #8ba0c5; border-bottom-color: #8ba0c5; background: linear-gradient(to right, #f0f6fe, #dfeafa); }
.cur { width: 0; margin-left: 3px; border: 4px solid transparent; border-left-color: #111; border-right: 0; }
.grid .focus { background: #f2f5fb; }
.grid .hl { background: #f2f200; }
.grid .fl { padding: 0 0 0 4px; }
.yellow { color: #ffd400; } .blue { color: #2f7fe8; }
.st svg { display: inline-block; vertical-align: -3px; margin: 0 4px 0 2px; }
.asc { display: inline-block; margin-left: 6px; border: 3px solid transparent; border-bottom: 4px solid #111; border-top: 0; vertical-align: 2px; }
.subs { width: 1126px; }
.reps { width: 1032px; }
.reps th { height: 19px; }
.reps td { height: 18px; }
.reps tr > :last-child { border-right: 1px solid #a6caf0; }
.c10 { width: 10px; } .c12 { width: 12px; } .c25 { width: 25px; } .c30 { width: 30px; } .c40 { width: 40px; } .c43 { width: 43px; }
.c46 { width: 46px; } .c50 { width: 50px; } .c51 { width: 51px; } .c54 { width: 54px; } .c56 { width: 56px; } .c60 { width: 60px; }
.c62 { width: 62px; } .c64 { width: 64px; } .c66 { width: 66px; } .c69 { width: 69px; } .c71 { width: 71px; } .c72 { width: 72px; }
.c81 { width: 81px; } .c144 { width: 144px; } .c152 { width: 152px; } .c236 { width: 236px; }

.vscroll { display: flex; flex-direction: column; align-items: center; justify-content: space-between; padding: 6px 0; background: #d8e3f1; }
.vscroll .thumb { width: 14px; height: 50px; margin: 6px 0 auto; border: 1px solid #8ba0c5; border-radius: 2px; background: repeating-linear-gradient(#8ba0c5 0 1px, transparent 1px 2px) center / 8px 8px no-repeat, linear-gradient(to right, #e6effa, #c5d6ea); }
.hscroll { grid-column: 1 / -1; display: flex; align-items: center; gap: 6px; height: 16px; padding: 0 23px 0 6px; background: #d8e3f1; }
.hscroll .thumb { width: 920px; max-width: 85%; height: 14px; margin-right: auto; border: 1px solid #8ba0c5; border-radius: 2px; background: repeating-linear-gradient(to right, #8ba0c5 0 1px, transparent 1px 2px) center / 8px 7px no-repeat, linear-gradient(#dde8f5, #c5d6ea); }
.up, .down, .left, .right { border: 4px solid transparent; }
.up { border-bottom: 5px solid #3f5477; border-top: 0; }
.down { border-top: 5px solid #3f5477; border-bottom: 0; }
.left { border-right: 5px solid #3f5477; border-left: 0; }
.right { border-left: 5px solid #3f5477; border-right: 0; }
.ring { position: absolute; border: 4px solid #f90; box-shadow: 1px 2px 2px #0005, inset 1px 2px 2px #0004; pointer-events: none; z-index: 2; }
.ring-row { left: -13px; top: 80px; width: 963px; height: 37px; border-radius: 9px; }

.actions { display: flex; gap: 2px; padding: 12px 0 0 9px; font: 11px/14px Roboto, sans-serif; }
.actions button { width: 100px; height: 32px; border: 1px solid #a9bad2; border-radius: 3px; background: linear-gradient(#e0ecf9, #d2e1f0); }
.actions button:disabled { color: #8593a6; border-color: #b9c9dc; background: #d0dfee; }
.grip-h { width: 15px; height: 2px; margin: 13px auto 2px 554px; background: repeating-linear-gradient(to right, #8299bd 0 2px, transparent 2px 4px); }
.subtabs { display: flex; align-items: flex-end; padding-left: 4px; font: 11px/14px Roboto, sans-serif; }
.subtabs button { height: 23px; padding: 0 9px; border: 1px solid #8ba0c5; border-left: 0; border-bottom: 0; background: linear-gradient(#bccfe6, #a7bedb); }
.subtabs .on { height: 26px; margin-bottom: -1px; border-left: 1px solid #8ba0c5; background: #fff; }
.sheet { flex: 1; margin-right: 4px; padding: 4px 4px 0 3px; border: 1px solid #8ba0c5; border-bottom: 0; background: #fff; min-height: 0; }
.sheet-in { height: 100%; background: #d0dced; border-left: 1px solid #8ba0c5; border-top: 1px solid #8ba0c5; overflow: hidden; }

.browser { position: relative; display: flex; flex-direction: column; min-width: 0; overflow: hidden; border-left: 1px solid #1c2a38; box-shadow: inset 1px 0 #3aa6e0; padding-left: 1px; background: #f9f9fa; z-index: 1; }
.tabstrip { display: flex; align-items: center; height: 33px; padding-left: 40px; background: #3aa6e0; border-bottom: 1px solid #2476a4; }
.btab { display: flex; align-items: center; gap: 6px; width: 224px; height: 33px; padding: 2px 12px 0 9px; margin-bottom: -1px; background: #f9f9fa; border-top: 2px solid #0a84ff; color: #0c0c0d; }
.btab span { flex: 1; }
.plus { margin-left: 10px; }
.bcontrols { margin-left: auto; }
.toolbar { display: flex; align-items: center; gap: 16px; height: 41px; padding-left: 3px; }
.toolbar .back { display: grid; place-items: center; width: 34px; height: 34px; margin-right: -6px; border: 1px solid #b1b1b3; border-radius: 50%; background: #fff; }
.url { display: flex; align-items: center; flex: none; width: 59.2%; height: 30px; margin-left: 105px; padding: 0 6px 0 9px; gap: 12px; border: 1px solid #c4c4c6; border-radius: 2px; background: #fff; }
.addr { flex: 1; margin-left: -2px; font-size: 14px; line-height: 20px; color: #7a7a7c; white-space: nowrap; overflow: hidden; max-width: 506px; mask-image: linear-gradient(to right, #000 91%, transparent); }
.addr b { font-weight: 400; color: #0c0c0d; }
.zoom { margin-left: auto; width: 39px; height: 17px; border: 1px solid #d0d0d2; border-radius: 9px; background: #f0f0f1; color: #0c0c0d; text-align: center; }
.urlsep { width: 1px; height: 22px; background: #d7d7db; }
.ext { display: flex; gap: 16px; margin-left: auto; padding-right: 14px; }
.bookmarks { display: flex; align-items: center; gap: 12px; height: 22px; padding-left: 12px; border-bottom: 1px solid #ccc; color: #0c0c0d; white-space: nowrap; }
.bookmarks a { display: flex; align-items: center; gap: 4px; }
.rules { display: flex; gap: 5px; margin: 0 -1px; }
.rules i { width: 1px; height: 16px; background: #b1b1b3; }
.mini { font: bold 9px "Liberation Sans", sans-serif; }
.white { fill: #fff; }

.appbar { display: flex; align-items: center; height: 40px; padding-left: 16px; background: #2a5aa0; color: #fff; font-size: 16px; line-height: 20px; }
.menu { display: grid; gap: 3px; width: 18px; margin-right: 16px; }
.menu i { height: 2px; background: #fff; }
.appbar h2 { font-size: 16px; }
.week { margin-left: auto; color: #94add6; font-size: 15px; }
.prev { margin: 0 28px 0 27px; border: 7px solid transparent; border-right: 8px solid #fff; border-left: 0; }
.next { width: 1px; height: 2px; background: #fff; }

.plan-wrap { position: relative; flex: 1; min-height: 0; overflow: hidden; }
.timetable { width: 105.5%; table-layout: fixed; border-collapse: separate; border-spacing: 0; background: #afc4e8; color: #111; font-size: 11px; line-height: 17px; }
.timetable thead th { height: 47px; padding: 3px 0 0; vertical-align: top; background: #346bc0; color: #fff; font-size: 12px; font-weight: 400; line-height: 20px; border-left: 1px solid #5585c8; }
.timetable tbody th { padding: 0; vertical-align: top; background: #346bc0; color: #fff; font-weight: 400; border-top: 1px solid #5585c8; }
.timetable thead th:first-child { border-left: 0; }
.timetable th div { display: flex; justify-content: space-between; padding: 2px 4px 0; text-align: right; }
.timetable b { font-weight: 400; }
.timetable td { padding: 2px 0 0 3px; vertical-align: top; border-left: 1px solid #5585c8; border-top: 1px solid #5585c8; }
.timetable tbody tr { height: 69px; }
.timetable tbody .h68 { height: 68px; }
.timetable .ev { background: #fff; }
.ev div { height: 64px; }
.timetable .thick { border-left-width: 2px; }
.timetable .now { background: #869c73; }
.timetable .current > * { border-top-color: #18e84c; }
.duty { position: relative; }
.duty span { position: absolute; left: 40%; top: -12px; padding: 3px 6px 2px; border-radius: 4px; background: #22c982e6; }
.ring-cell { left: 55.3%; top: 99px; width: 227px; height: 103px; border-radius: 24px; }
```
